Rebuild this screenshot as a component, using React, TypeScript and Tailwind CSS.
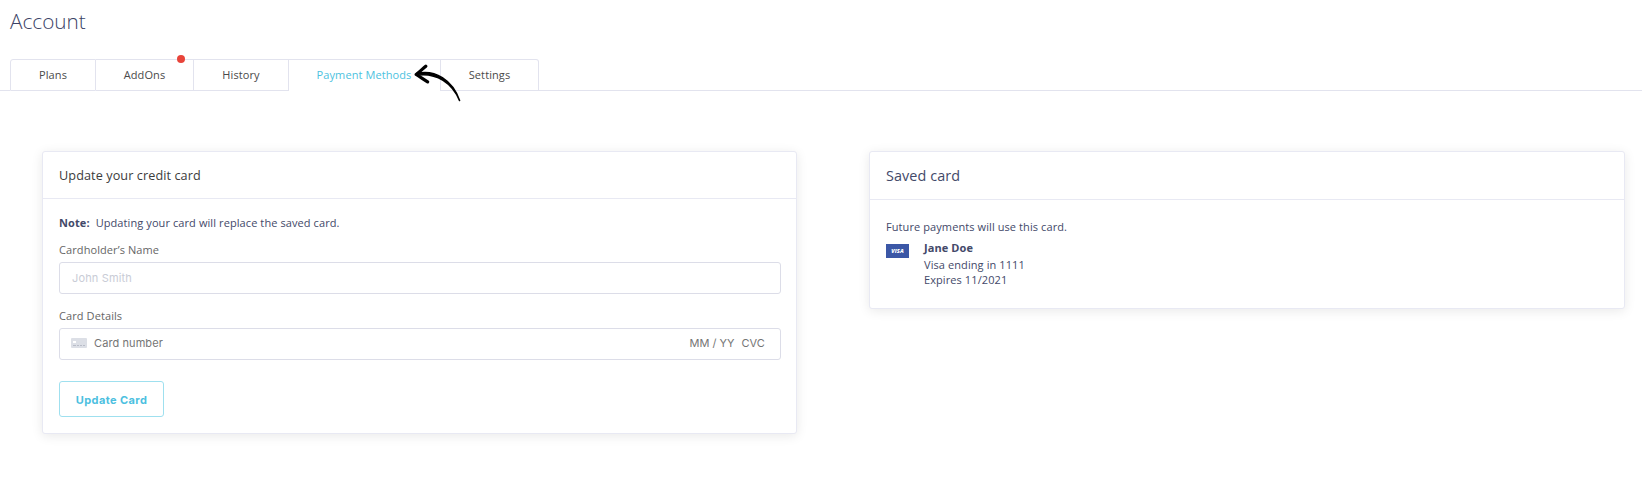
import type { ReactNode } from 'react'

const tabs = [
  { label: 'Plans', className: 'w-[86px] rounded-tl-[3px] border-l border-b' },
  { label: 'AddOns', className: 'w-[98px] border-b', alert: true },
  { label: 'History', className: 'w-[95px] border-b' },
  { label: 'Payment Methods', className: 'w-[152px] pr-px text-[#4cc2e0]' },
  { label: 'Settings', className: 'w-[98px] rounded-tr-[3px] border-b' },
]

function Panel({ title, className, titleClassName, children }: {
  title: string
  className: string
  titleClassName: string
  children: ReactNode
}) {
  return (
    <section className={`rounded-[3px] border border-[#e8e9f3] bg-white shadow-[0_2px_12px_rgba(0,0,0,0.09)] ${className}`}>
      <h2 className={`border-b border-[#e8e9f3] px-4 ${titleClassName}`}>{title}</h2>
      {children}
    </section>
  )
}

function CardIcon() {
  return (
    <svg className="mb-[2px] h-[10px] w-4" viewBox="0 0 16 10">
      <rect width="16" height="10" rx="1" fill="#dcdfe6" />
      <rect x="2" y="3" width="3" height="2" fill="#fff" />
      <path d="M2 7.5h3m1 0h2m1 0h2m1 0h2" stroke="#b9bdc8" />
    </svg>
  )
}

function Arrow() {
  return (
    <svg className="absolute left-[414px] top-[64px] h-[39px] w-[48px]" viewBox="0 0 48 39" fill="none" stroke="#000" strokeLinecap="round" strokeLinejoin="round">
      <path d="M11.8 2.2C8.5 5 5.5 8 2.2 10.5C6 12.8 9.5 15.3 13.6 17.8" strokeWidth="3.2" />
      <path d="M2.5 9.6C21 5.1 38.5 16 45.6 36.6C38.5 19.5 23 8.2 2.5 11.2Z" fill="#000" strokeWidth="1.5" />
    </svg>
  )
}

export default function App() {
  return (
    <div className="relative h-[484px] w-[1642px] overflow-hidden bg-white font-['Open_Sans',sans-serif] text-[11px] tracking-[0.09px] text-[#434969]">
      <h1 className="h-[59px] pl-[10px] pt-[6px] text-[20.75px] leading-[30px] font-light tracking-normal text-[#3b4266]">Account</h1>

      <nav className="flex h-8 text-[#4a4a4a]">
        <div className="w-[10px] border-b border-[#e2e3ee]" />
        {tabs.map((tab) => (
          <button
            key={tab.label}
            className={`relative border-t border-r border-[#e2e3ee] pb-px leading-[30px] ${tab.className}`}
          >
            {tab.label}
            {tab.alert && <span className="absolute right-[8px] -top-[5px] size-2 rounded-full bg-[#e8443a]" />}
          </button>
        ))}
        <div className="flex-1 border-b border-[#e2e3ee]" />
      </nav>
      <Arrow />

      <main className="flex items-start justify-between pt-[60px] pr-[17px] pl-[42px]">
        <Panel title="Update your credit card" className="h-[283px] w-[755px]" titleClassName="h-[47px] text-[12.65px] leading-[47px] text-[#3c3c3c]">
          <div className="px-4 pt-[15px]">
            <p className="h-[27px] leading-[17px]">
              <b className="mr-[6px]">Note:</b>Updating your card will replace the saved card.
            </p>
            <label className="block h-[21px] leading-[17px] text-[#666]">Cardholder’s Name</label>
            <input
              className="block h-8 w-[722px] rounded-[3px] border border-[#dcdde8] px-3 font-['Inter',sans-serif] tracking-[0.15px] placeholder:text-[#c9ccd6]"
              placeholder="John Smith"
            />
            <label className="mt-[13px] block h-[21px] leading-[17px] text-[#666]">Card Details</label>
            <div className="flex h-8 w-[722px] items-center rounded-[3px] border border-[#dcdde8] pr-[15px] pl-[11px] font-['Inter',sans-serif] text-[#757575]">
              <CardIcon />
              <span className="ml-[7px] pb-[2px]">Card number</span>
              <span className="ml-auto pb-[2px] tracking-normal">MM / YY</span>
              <span className="ml-[7px] pb-[2px]">CVC</span>
            </div>
            <button className="mt-[21px] h-9 w-[105px] rounded-[3px] border border-[#9fe0ef] pt-[3px] font-['Inter',sans-serif] font-bold tracking-[0.4px] text-[#4cbfdf]">
              Update Card
            </button>
          </div>
        </Panel>

        <Panel title="Saved card" className="h-[158px] w-[756px]" titleClassName="h-[48px] text-[14.4px] leading-[47px]">
          <div className="px-4 pt-[18px]">
            <p className="h-[22px] leading-[17px]">Future payments will use this card.</p>
            <div className="flex">
              <span className="mt-1 mr-[15px] flex h-[14px] w-[23px] items-center justify-center bg-[#3b57a6] text-[5.5px] font-extrabold italic text-white">
                VISA
              </span>
              <div className="leading-[15px]">
                <b className="block h-[17px]">Jane Doe</b>
                <p>Visa ending in 1111</p>
                <p>Expires 11/2021</p>
              </div>
            </div>
          </div>
        </Panel>
      </main>
    </div>
  )
}
